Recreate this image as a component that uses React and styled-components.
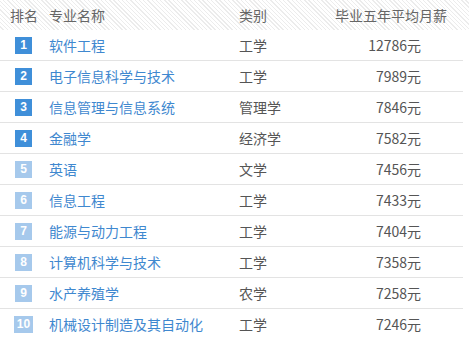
import React from 'react';
import styled, { createGlobalStyle } from 'styled-components';

const GlobalStyle = createGlobalStyle`
  body {
    margin: 0;
    background: #fff;
    font-family: "Noto Sans CJK SC", "Noto Sans", sans-serif;
  }
`;

const majors = [
  { name: '软件工程', type: '工学', salary: 12786 },
  { name: '电子信息科学与技术', type: '工学', salary: 7989 },
  { name: '信息管理与信息系统', type: '管理学', salary: 7846 },
  { name: '金融学', type: '经济学', salary: 7582 },
  { name: '英语', type: '文学', salary: 7456 },
  { name: '信息工程', type: '工学', salary: 7433 },
  { name: '能源与动力工程', type: '工学', salary: 7404 },
  { name: '计算机科学与技术', type: '工学', salary: 7358 },
  { name: '水产养殖学', type: '农学', salary: 7258 },
  { name: '机械设计制造及其自动化', type: '工学', salary: 7246 }
];

const Table = styled('div')`
  width: 469px;
  font-size: 14px;
`;

const HeaderRow = styled('div')`
  display: grid;
  grid-template-columns: 47px 190px 96px 112px;
  align-items: center;
  height: 30px;
  color: #666;
  background: repeating-linear-gradient(
    45deg,
    #fff 0,
    #fff 2px,
    #ececec 2px,
    #ececec 3px
  );
`;

const HeadCell = styled('span')`
  padding-left: ${(p) => (p.first ? '10px' : '2px')};
  text-align: ${(p) => (p.right ? 'right' : 'left')};
  white-space: nowrap;
`;

const Row = styled('div')`
  display: grid;
  grid-template-columns: 47px 190px 96px 88px;
  align-items: center;
  height: 30px;
  width: 463px;
  border-bottom: 1px solid #e3e3e3;
`;

const RankCell = styled('div')`
  display: flex;
  justify-content: center;
`;

const Badge = styled('span')`
  min-width: 17px;
  height: 17px;
  padding: 0 ${(p) => (p.wide ? '3px' : '0')};
  box-sizing: border-box;
  background: ${(p) => (p.top ? '#3f8fd9' : '#a6c9ec')};
  color: #fff;
  font-family: "Liberation Sans", Arial, sans-serif;
  font-weight: bold;
  font-size: 12px;
  line-height: 17px;
  text-align: center;
`;

const Name = styled('a')`
  padding-left: 2px;
  color: #3f88cf;
  text-decoration: none;
  white-space: nowrap;
`;

const Type = styled('span')`
  padding-left: 2px;
  color: #555;
`;

const Salary = styled('span')`
  text-align: right;
  color: #555;
  white-space: nowrap;
`;

const App = () => (
  <>
    <GlobalStyle />
    <Table>
      <HeaderRow>
        <HeadCell first>排名</HeadCell>
        <HeadCell>专业名称</HeadCell>
        <HeadCell>类别</HeadCell>
        <HeadCell right>毕业五年平均月薪</HeadCell>
      </HeaderRow>
      {majors.map((m, i) => (
        <Row key={m.name}>
          <RankCell>
            <Badge top={i < 4} wide={i >= 9}>
              {i + 1}
            </Badge>
          </RankCell>
          <Name href="#">{m.name}</Name>
          <Type>{m.type}</Type>
          <Salary>{m.salary}元</Salary>
        </Row>
      ))}
    </Table>
  </>
);

export default App;
